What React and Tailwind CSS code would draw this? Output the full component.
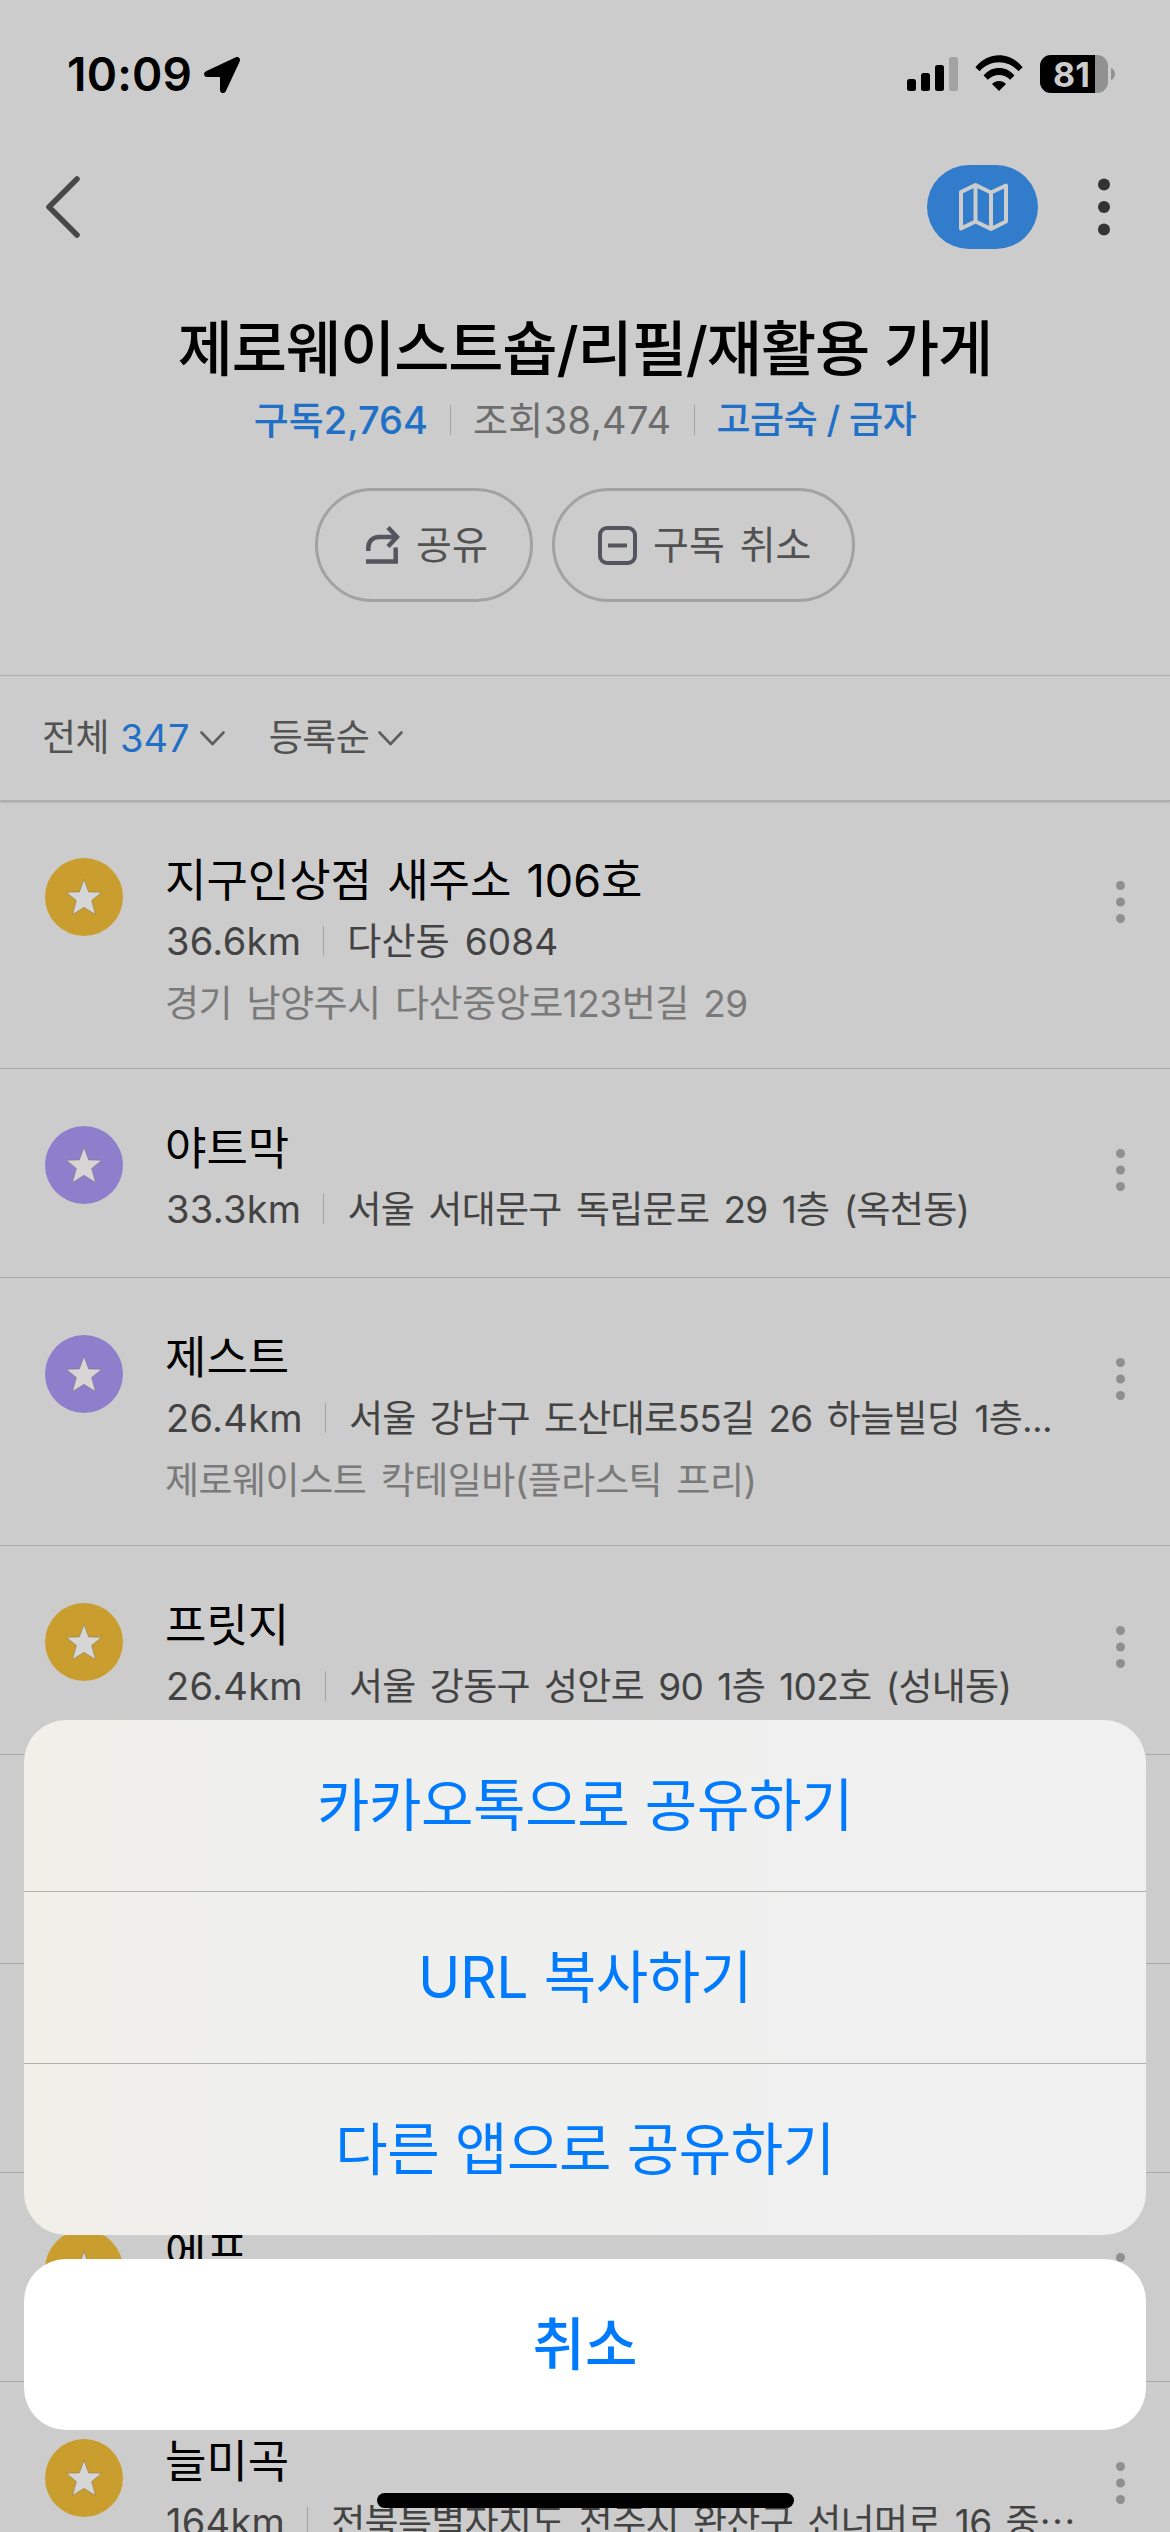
import React from 'react';

const places = [
  { color: 'yellow', name: '지구인상점 새주소 106호', distance: '36.6km', address: '다산동 6084', memo: '경기 남양주시 다산중앙로123번길 29', wide: true },
  { color: 'purple', name: '야트막', distance: '33.3km', address: '서울 서대문구 독립문로 29 1층 (옥천동)' },
  { color: 'purple', name: '제스트', distance: '26.4km', address: '서울 강남구 도산대로55길 26 하늘빌딩 1층...', memo: '제로웨이스트 칵테일바(플라스틱 프리)' },
  { color: 'yellow', name: '프릿지', distance: '26.4km', address: '서울 강동구 성안로 90 1층 102호 (성내동)' },
  {},
  {},
  { color: 'yellow', name: '에프' },
  { color: 'yellow', name: '늘미곡', distance: '164km', address: '전북특별자치도 전주시 완산구 선너머로 16 중⋯' },
];

const shareActions = ['카카오톡으로 공유하기', 'URL 복사하기', '다른 앱으로 공유하기'];

const StatusBar = () => (
  <div className="flex items-start h-[148px] pl-[67px] pr-[55px] pt-[46px]">
    <span className="w-[125px] text-[46px] leading-[56px] font-semibold tracking-[0.2px] text-black">10:09</span>
    <svg className="w-9 h-9 mt-[11px] ml-3" viewBox="0 0 36 36" fill="#000">
      <path d="M31.800.300 2 14.300C-1 16-.3 20 3 20h12.200c.5 0 .8.300.8.800V33c0 3.400 4.300 4.200 5.800 1.200L35.700 4.500C36.800 1.500 34.500-.9 31.800.300Z" />
    </svg>
    <div className="flex ml-auto mt-[9px] items-start">
      <svg className="w-[51px] h-[38px]" viewBox="0 0 51 38">
        <rect x="0" y="24" width="9" height="12" rx="2.5" />
        <rect x="14" y="18" width="9" height="18" rx="2.5" />
        <rect x="28" y="10" width="9" height="26" rx="2.5" />
        <rect x="42" y="2" width="9" height="34" rx="2.5" fill="#a3a3a3" />
      </svg>
      <svg className="w-[48px] h-[38px] ml-[17px]" viewBox="0 0 48 38">
        <path d="M.4 12.200C13.200-3.800 34.800-3.800 47.600 12.200L43.400 16.200C32.500 4.400 15.500 4.400 4.600 16.200Z" />
        <path d="M8.600 20.500C16.500 10.600 31.500 10.600 39.400 20.500L35.200 24.700C29.200 18.300 18.800 18.300 12.800 24.700Z" />
        <path d="M17 29C20.500 25 27.500 25 31 29L24 36Z" />
      </svg>
      <div className="relative flex ml-[17px] w-[68px] h-[38px] rounded-[11px] overflow-hidden bg-[#919191]">
        <div className="w-[55px] bg-black" />
        <span className="absolute left-[13px] top-0 text-[34px] leading-[39px] font-bold text-[#cccccc]">81</span>
      </div>
      <svg className="w-1 h-3 mt-[13px] ml-[3px]" viewBox="0 0 4 12">
        <path d="M0 0C5.300 2 5.300 10 0 12Z" fill="#919191" />
      </svg>
    </div>
  </div>
);

const NavBar = () => (
  <div className="flex items-center h-[118px] pl-[44px] pr-[60px]">
    <svg className="w-[38px] h-16" viewBox="0 0 38 64" fill="none" stroke="#484848" strokeWidth="5.500" strokeLinecap="round" strokeLinejoin="round">
      <path d="M33 4 5 32 33 60" />
    </svg>
    <div className="flex items-center justify-center ml-auto w-[111px] h-[84px] rounded-[42px] bg-[#317dcc]">
      <svg className="w-[50px] h-[50px]" viewBox="0 0 50 50" fill="none" stroke="#cccccc" strokeWidth="4" strokeLinejoin="round">
        <path d="M3 10 17.500 3 33 10.500 48 3.500V39.500L33 47 17.500 39.500 3 46.500ZM17.500 3V39.500M33 10.500V47" />
      </svg>
    </div>
    <svg className="w-3 h-[58px] ml-[60px]" viewBox="0 0 12 58" fill="#333">
      <circle cx="6" cy="6.500" r="6" />
      <circle cx="6" cy="29" r="6" />
      <circle cx="6" cy="51.500" r="6" />
    </svg>
  </div>
);

const Bar = () => <i className="block w-px h-[30px] bg-[#a3a3a3]" />;

const Chevron = () => (
  <svg className="w-[25px] h-[15px]" viewBox="0 0 25 15" fill="none" stroke="#5f5f5f" strokeWidth="2.600" strokeLinecap="round" strokeLinejoin="round">
    <path d="M1.500 1.500 12.500 13 23.500 1.500" />
  </svg>
);

const PlaceRow = ({ place }) => (
  <div className={`flex items-start shrink-0 border-b border-[#a9a9a9] px-[45px] pt-[57px] ${place.memo ? 'h-[268px]' : 'h-[209px]'}`}>
    {place.name && (
      <>
        <div className={`flex items-center justify-center w-[78px] h-[78px] rounded-full ${place.color === 'yellow' ? 'bg-[#ca9e2e]' : 'bg-[#8d7fcc]'}`}>
          <svg className="w-9 h-9" viewBox="0 0 36 36" fill="#d6d6d6" stroke="#6b6350" strokeWidth="0.400">
            <path d="M18 .5 22.600 12.900 35.600 13.300 25.600 21.500 29.500 35.500 18 28.300 6.500 35.500 10.400 21.500 .4 13.300 13.400 12.900Z" />
          </svg>
        </div>
        <div className="ml-[42px] flex flex-col whitespace-nowrap">
          <div className="h-[62px] -mt-[9px] text-[45px] leading-[64px] [word-spacing:2.500px] text-black">{place.name}</div>
          {place.distance && (
            <div className="flex items-center h-[60px] ml-px text-[#434343]">
              <span className="text-[38px] leading-[60px] tracking-[0.3px]">{place.distance}</span>
              <div className="ml-[22px] mr-[23px]"><Bar /></div>
              <span className={`pt-px text-[37px] leading-[60px] [word-spacing:4.500px] ${place.wide ? 'tracking-[0.1px]' : 'tracking-[-0.7px]'}`}>{place.address}</span>
            </div>
          )}
          {place.memo && <div className="pt-[2px] text-[37px] leading-[62px] tracking-[-0.5px] [word-spacing:4.500px] text-[#7a7a7a]">{place.memo}</div>}
        </div>
        <svg className="w-[9px] h-[42px] ml-auto mt-[23px]" viewBox="0 0 9 42" fill="#8f8f8f">
          <circle cx="4.500" cy="4.500" r="4.500" />
          <circle cx="4.500" cy="21" r="4.500" />
          <circle cx="4.500" cy="37.500" r="4.500" />
        </svg>
      </>
    )}
  </div>
);

export default function App() {
  return (
    <div className="relative w-[1170px] h-[2532px] overflow-hidden bg-[#cccccc] font-['Inter','Noto_Sans_CJK_KR',sans-serif]">
      <StatusBar />
      <NavBar />
      <div className="flex flex-col items-center h-[409px] pt-[39px] whitespace-nowrap">
        <h1 className="text-[60px] leading-[88px] font-medium tracking-[-1.100px] text-black">제로웨이스트숍/리필/재활용 가게</h1>
        <div className="flex items-center h-[54px] leading-[54px]">
          <span className="text-[38px] font-medium text-[#1f70c6]">구독2,764</span>
          <div className="mx-[22px]"><Bar /></div>
          <span className="text-[38px] tracking-[0.4px] text-[#6d6d6d]">조회38,474</span>
          <div className="mx-[22px]"><Bar /></div>
          <span className="text-[37px] tracking-[-0.5px] font-medium text-[#1f70c6]">고금숙 / 금자</span>
        </div>
        <div className="flex gap-[19px] mt-[41px] text-[39px] text-[#525252]">
          <div className="flex items-center w-[218px] h-[114px] rounded-[57px] border-[3px] border-[#a2a2a2] pl-[48px]">
            <svg className="w-[34px] h-[38px]" viewBox="0 0 34 38" fill="none" stroke="#55555f" strokeWidth="4.500">
              <path d="M2.300 25V22C2.300 15 7 11 13 11H30M22 1.500 31 11 22 20.500M0 35.500H29.700V21.500" />
            </svg>
            <span className="ml-4">공유</span>
          </div>
          <div className="flex items-center w-[303px] h-[114px] rounded-[57px] border-[3px] border-[#a2a2a2] pl-[43px]">
            <svg className="w-[39px] h-[39px]" viewBox="0 0 39 39" fill="none" stroke="#55555f" strokeWidth="4">
              <rect x="2" y="2" width="35" height="35" rx="7" />
              <path d="M10 19.500H29" />
            </svg>
            <span className="ml-4 [word-spacing:4px]">구독 취소</span>
          </div>
        </div>
      </div>
      <div className="flex items-center h-[126px] border-y border-[#b0b0b0] shadow-[0_1px_2px_rgba(0,0,0,0.25)] pl-[42px] text-[37px] tracking-[-0.500px] text-[#525252]">
        <span>전체</span>
        <span className="ml-[11px] text-[38px] tracking-normal text-[#1f70c6]">347</span>
        <div className="ml-[10px]"><Chevron /></div>
        <span className="ml-[44px]">등록순</span>
        <div className="ml-[9px]"><Chevron /></div>
      </div>
      <div className="flex flex-col">
        {places.map((place, i) => <PlaceRow key={i} place={place} />)}
      </div>

      {/* Share sheet */}
      <div className="absolute left-6 right-6 top-[1720px] flex flex-col gap-6 text-[57px] text-[#007aff]">
        <div className="rounded-[42px] overflow-hidden bg-linear-to-r from-[#f1efe8] via-[#efefee] via-20% to-[#f0f0f0] divide-y divide-[#b0b0ae] tracking-[-0.400px]">
          {shareActions.map((label, i) => (
            <div key={i} className={`flex items-center justify-center ${i === 2 ? 'h-[171px]' : 'h-[172px]'}`}>{label}</div>
          ))}
        </div>
        <div className="flex items-center justify-center h-[171px] rounded-[42px] bg-white font-medium">취소</div>
      </div>
      <div className="absolute left-[377px] top-[2493px] w-[417px] h-[15px] rounded-full bg-black" />
    </div>
  );
}
